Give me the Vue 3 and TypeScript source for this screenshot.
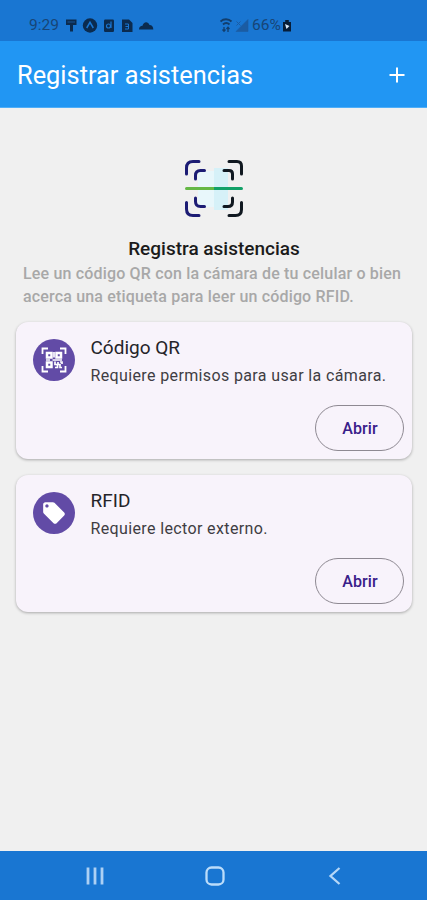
<script setup lang="ts">
interface ScanOption {
  id: 'qr' | 'rfid'
  title: string
  description: string
}

const options: ScanOption[] = [
  { id: 'qr', title: 'Código QR', description: 'Requiere permisos para usar la cámara.' },
  { id: 'rfid', title: 'RFID', description: 'Requiere lector externo.' },
]
</script>

<template>
  <div class="screen">
    <header class="status">
      <span class="clock">9:29</span>
      <svg class="notices" width="92" height="16" viewBox="0 0 92 16" fill="#0b2b4f">
        <path d="M2 2.500h10.500V8H9v6.500H6V8H2z" />
        <path d="M3.500 5h7.500" stroke="#1c5fa8" stroke-width=".8" />
        <circle cx="26" cy="8.500" r="7.200" />
        <path d="M22.700 11L26 5.300l3.300 5.700" fill="none" stroke="#1976d2" stroke-width="1.500" />
        <rect x="40" y="2.500" width="10" height="12.500" rx="1.200" />
        <circle cx="44.500" cy="9" r="2" fill="none" stroke="#1976d2" stroke-width="1.200" />
        <path d="M47 4.500V11" stroke="#1976d2" stroke-width="1.200" />
        <path d="M58 2.500h7L68.500 6v9H58z" />
        <path d="M61 7h3.500v5H61M61.500 9.500h3" fill="none" stroke="#1976d2" stroke-width="1" />
        <path d="M75 12.500c0-2.500 1.500-3.500 3.500-3.700C79.500 4.500 84 4 85.500 8c2.500 0 3.800 2 3.800 4.500z" />
      </svg>
      <svg class="signal" width="30" height="16" viewBox="0 0 30 16" fill="none" stroke="#123e6d">
        <path d="M.5 4.500c3-3 8-3 11 0M3 7.500c2-2 4.500-2 6.500 0" stroke-width="1.900" />
        <path d="M4 10v5M8 10v5M2.500 12.500L4 14.300 5.500 12.500M6.500 12L8 10.300 9.500 12" stroke-width="1.300" />
        <path d="M28 2.500V14.500H16z" fill="#1b5ca3" stroke="#1b5ca3" stroke-width=".6" />
        <path d="M16.500 4.500l4 4m0-4l-4 4" stroke="#1b5ca3" stroke-width="1" />
      </svg>
      <span class="percent">66%</span>
      <svg class="battery" width="10" height="14" viewBox="0 0 10 14">
        <path d="M3.200 1h3.600v2H9v9.500H1V3h2.200z" fill="#071d38" />
        <path d="M3 5l4.500 2L4.500 10z" fill="#d8e9fa" />
      </svg>
    </header>

    <div class="appbar">
      <h1>Registrar asistencias</h1>
      <svg class="add" width="16" height="16" viewBox="0 0 16 16">
        <path d="M8 .5v15M.5 8h15" stroke="#fff" stroke-width="2" />
      </svg>
    </div>

    <main class="content">
      <svg class="scan" width="60" height="60" viewBox="0 0 60 60" fill="none" stroke-width="3" stroke-linecap="round">
        <path d="M14 12h16v36H14z" fill="#e8f7fb" />
        <path d="M30 9h14v42H30z" fill="#d6f1f8" />
        <g stroke="#1c1c74">
          <path d="M2.500 15V9q0-6.500 6.500-6.500h6M2.500 43.500V50q0 6.500 6.500 6.500h6" />
          <path d="M11.500 20v-3.500q0-5 5-5H20.500M11.500 39v3.500q0 5 5 5H20.500" />
        </g>
        <g stroke="#101820">
          <path d="M45 2.500h8q4.500 0 4.500 4.500v8M45 56.500h6.500q6 0 6-6V43.500" />
          <path d="M40 11.500h5q3.500 0 3.500 3.500V20M40 47.500h4q4.500 0 4.500-4.500V39" />
        </g>
        <path d="M2.500 29.500H30" stroke="#65b845" />
        <path d="M32 29.500h25.500" stroke="#12a168" />
        <path d="M30 29.500h4" stroke="#12a168" stroke-linecap="butt" />
      </svg>
      <h2>Registra asistencias</h2>
      <p class="intro">Lee un código QR con la cámara de tu celular o bien<br />acerca una etiqueta para leer un código RFID.</p>

      <section v-for="option in options" :key="option.id" class="card">
        <div class="badge">
          <svg v-if="option.id === 'qr'" width="26" height="26" viewBox="0 0 26 26" fill="none" stroke="#fff">
            <path d="M1.500 7V1.500H7M19 1.500h5.500V7M24.500 19v5.500H19M7 24.500H1.500V19" stroke-width="1.800" />
            <path d="M6 6h4.500v4.500H6zM15.500 6H20v4.500h-4.500zM6 15.500h4.500V20H6z" stroke-width="2.500" />
            <path d="M13 5v5.500M11.500 13H21M5 13h4M14 14.500v3h3v-2.500M19 15h2v2M14 20.500h2.500v-3H19v3h2" stroke-width="1.700" />
          </svg>
          <svg v-else width="26" height="26" viewBox="0 0 24 24" fill="#fff">
            <path d="m21.410 11.580-9-9C12.050 2.220 11.550 2 11 2H4c-1.100 0-2 .9-2 2v7c0 .55.220 1.050.59 1.420l9 9c.36.360.86.580 1.410.580s1.050-.22 1.410-.59l7-7c.37-.36.590-.86.590-1.410s-.23-1.060-.59-1.420zM5.500 7C4.670 7 4 6.330 4 5.500S4.670 4 5.500 4 7 4.670 7 5.500 6.330 7 5.500 7z" />
          </svg>
        </div>
        <div class="body">
          <h3>{{ option.title }}</h3>
          <p>{{ option.description }}</p>
        </div>
        <button type="button">Abrir</button>
      </section>
    </main>

    <nav class="navbar">
      <svg width="20" height="20" viewBox="0 0 20 20"><path d="M3 1.500v17M10 1.500v17M17 1.500v17" stroke="#acd0f4" stroke-width="2.800" /></svg>
      <svg width="20" height="20" viewBox="0 0 20 20"><rect x="1.500" y="1.500" width="17" height="17" rx="5" fill="none" stroke="#bbdcfa" stroke-width="2.300" /></svg>
      <svg width="20" height="20" viewBox="0 0 20 20"><path d="M14.500 2L5.500 10l9 8" fill="none" stroke="#b5d7f7" stroke-width="2.300" /></svg>
    </nav>
  </div>
</template>

<style>
body {
  margin: 0;
}
</style>

<style scoped>
.screen {
  display: flex;
  flex-direction: column;
  width: 427px;
  height: 900px;
  background: #f0f0f0;
  font-family: Roboto, 'Liberation Sans', sans-serif;
  overflow: hidden;
}

h1, h2, h3, p {
  margin: 0;
  font-weight: 400;
}

svg {
  display: block;
  flex: none;
}

.status {
  display: flex;
  align-items: center;
  box-sizing: border-box;
  height: 41px;
  padding: 9px 0 0 29px;
  background: #1976d2;
  color: #174577;
  font-size: 15.500px;
  line-height: 20px;
}

.clock {
  width: 35px;
}

.signal {
  margin-left: 64px;
}

.percent {
  width: 29px;
  margin-left: 2px;
  white-space: nowrap;
}

.battery {
  margin: 2px 0 0 1px;
}

.appbar {
  display: flex;
  align-items: center;
  justify-content: space-between;
  box-sizing: border-box;
  height: 67px;
  padding: 2px 22px 0 17px;
  background: #2196f3;
  border-bottom: 1px solid #4faef8;
  color: #fff;
}

.appbar h1 {
  font-size: 25.400px;
  line-height: 32px;
}

.content {
  display: flex;
  flex: 1;
  flex-direction: column;
  padding: 51px 15px 0 16px;
}

.scan {
  align-self: center;
}

.content h2 {
  margin-top: 18px;
  color: #1b1b1b;
  font-size: 19px;
  font-weight: 500;
  line-height: 24px;
  letter-spacing: 0;
  text-align: center;
}

.intro {
  margin: 1px 0 14px;
  padding-left: 7px;
  color: #a8a8a8;
  font-size: 16px;
  font-weight: 500;
  line-height: 23px;
  letter-spacing: 0.170px;
  white-space: nowrap;
}

.card {
  display: grid;
  grid-template-columns: 42px 1fr;
  column-gap: 16px;
  align-content: space-between;
  box-sizing: border-box;
  height: 137px;
  margin-bottom: 16px;
  padding: 13px 8px 8px 16.500px;
  border-radius: 12px;
  background: #f8f3fb;
  box-shadow: 0 1px 3px rgb(0 0 0 / 30%);
}

.badge {
  display: flex;
  align-items: center;
  justify-content: center;
  width: 42px;
  height: 42px;
  margin-top: 3.500px;
  border-radius: 50%;
  background: #624ba6;
}

.body h3 {
  color: #252429;
  font-size: 19px;
  line-height: 26px;
  letter-spacing: 0;
}

.body p {
  margin-top: 3px;
  color: #3f3d43;
  font-size: 16px;
  line-height: 24px;
  letter-spacing: 0.370px;
  white-space: nowrap;
}

button {
  grid-column: 2;
  justify-self: end;
  width: 89px;
  height: 46px;
  padding: 0 0 0 1px;
  border: 1px solid #8e8992;
  border-radius: 23px;
  background: transparent;
  color: #392089;
  font: 500 16px Roboto, 'Liberation Sans', sans-serif;
  letter-spacing: 0.100px;
}

.navbar {
  display: flex;
  align-items: center;
  justify-content: space-between;
  box-sizing: border-box;
  height: 49px;
  padding: 1px 82px 0 85px;
  background: #1976d2;
}
</style>
